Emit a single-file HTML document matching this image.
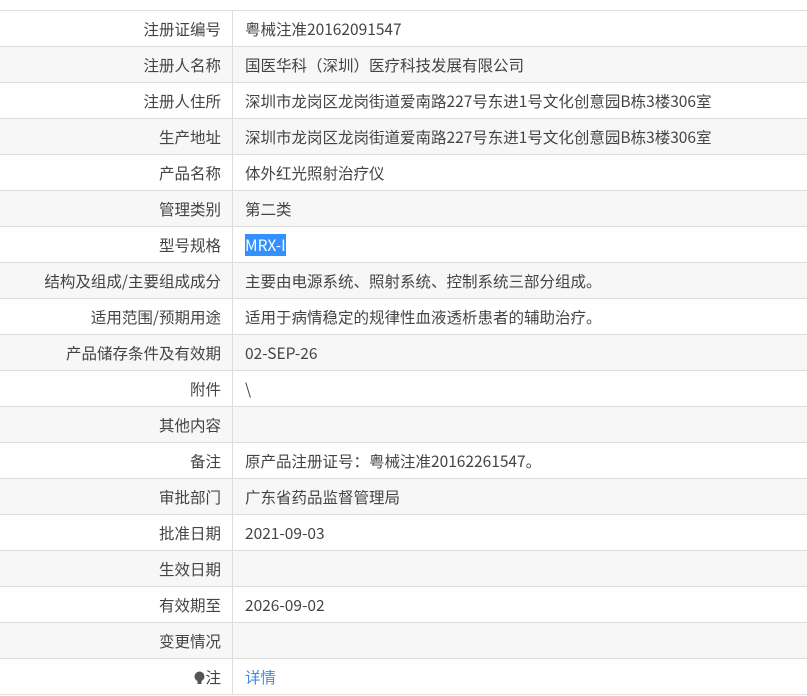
<!DOCTYPE html>
<html><head><meta charset="utf-8"><style>
body{margin:0;background:#fff;font-family:"Noto Sans CJK SC","Liberation Sans",sans-serif;font-size:15.5px;color:#444;}
table{position:absolute;top:10px;left:0;width:807px;border-collapse:collapse;}
td{height:35px;border-top:1px solid #ddd;border-bottom:1px solid #ddd;padding:0;white-space:nowrap;line-height:20px;}
td.l{width:221px;text-align:right;padding-right:11px;border-right:1px solid #ddd;}
td.v{padding-left:12px;}
tr:nth-child(even){background:#f7f7f7;}
.sel{background:#3390ff;color:#fff;}
a{color:#3a8ee6;text-decoration:none;}
</style></head><body>
<table>
<tr><td class="l">注册证编号</td><td class="v">粤械注准20162091547</td></tr>
<tr><td class="l">注册人名称</td><td class="v">国医华科（深圳）医疗科技发展有限公司</td></tr>
<tr><td class="l">注册人住所</td><td class="v">深圳市龙岗区龙岗街道爱南路227号东进1号文化创意园B栋3楼306室</td></tr>
<tr><td class="l">生产地址</td><td class="v">深圳市龙岗区龙岗街道爱南路227号东进1号文化创意园B栋3楼306室</td></tr>
<tr><td class="l">产品名称</td><td class="v">体外红光照射治疗仪</td></tr>
<tr><td class="l">管理类别</td><td class="v">第二类</td></tr>
<tr><td class="l">型号规格</td><td class="v"><span class="sel">MRX-I</span></td></tr>
<tr><td class="l">结构及组成/主要组成成分</td><td class="v">主要由电源系统、照射系统、控制系统三部分组成。</td></tr>
<tr><td class="l">适用范围/预期用途</td><td class="v">适用于病情稳定的规律性血液透析患者的辅助治疗。</td></tr>
<tr><td class="l">产品储存条件及有效期</td><td class="v">02-SEP-26</td></tr>
<tr><td class="l">附件</td><td class="v">\</td></tr>
<tr><td class="l">其他内容</td><td class="v"></td></tr>
<tr><td class="l">备注</td><td class="v">原产品注册证号：粤械注准20162261547。</td></tr>
<tr><td class="l">审批部门</td><td class="v">广东省药品监督管理局</td></tr>
<tr><td class="l">批准日期</td><td class="v">2021-09-03</td></tr>
<tr><td class="l">生效日期</td><td class="v"></td></tr>
<tr><td class="l">有效期至</td><td class="v">2026-09-02</td></tr>
<tr><td class="l">变更情况</td><td class="v"></td></tr>
<tr><td class="l"><svg width="11" height="14" viewBox="0 0 11 14" style="vertical-align:-2px"><circle cx="5.5" cy="5.5" r="5" fill="#555"/><rect x="3.5" y="9" width="4" height="4" fill="#555"/></svg>注</td><td class="v"><a>详情</a></td></tr>
</table>
</body></html>
